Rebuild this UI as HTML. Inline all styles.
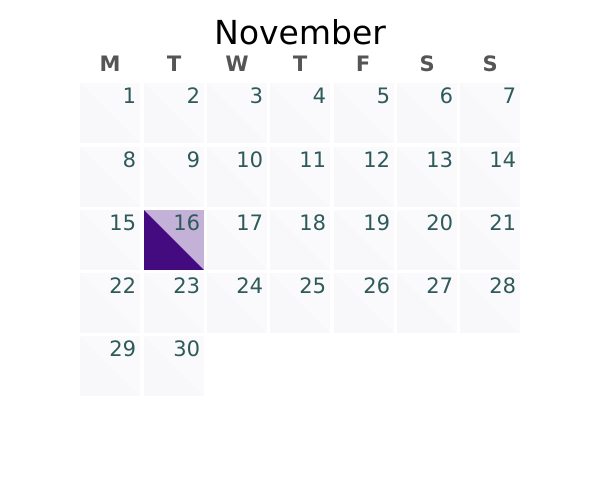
<!DOCTYPE html>
<html><head><meta charset="utf-8"><style>html,body{margin:0;padding:0;background:#fff;}svg{display:block}</style></head>
<body>
<svg width="600" height="480" xmlns="http://www.w3.org/2000/svg" font-family="DejaVu Sans, sans-serif">
<text x="300" y="44" text-anchor="middle" font-size="33" fill="#000">November</text>
<g font-size="21" font-weight="bold" fill="#555" text-anchor="middle">
<text x="110" y="71">M</text><text x="174" y="71">T</text><text x="237" y="71">W</text><text x="300" y="71">T</text><text x="363" y="71">F</text><text x="427" y="71">S</text><text x="490" y="71">S</text>
</g>
<g font-size="21" fill="#2f5a5a" text-anchor="end">
<g transform="translate(80,83)"><rect width="60" height="60" fill="#f8f8fa"/><polygon points="0,0 60,0 60,60" fill="#fafafc"/><text x="56" y="20">1</text></g>
<g transform="translate(144,83)"><rect width="60" height="60" fill="#f8f8fa"/><polygon points="0,0 60,0 60,60" fill="#fafafc"/><text x="56" y="20">2</text></g>
<g transform="translate(207,83)"><rect width="60" height="60" fill="#f8f8fa"/><polygon points="0,0 60,0 60,60" fill="#fafafc"/><text x="56" y="20">3</text></g>
<g transform="translate(270,83)"><rect width="60" height="60" fill="#f8f8fa"/><polygon points="0,0 60,0 60,60" fill="#fafafc"/><text x="56" y="20">4</text></g>
<g transform="translate(334,83)"><rect width="60" height="60" fill="#f8f8fa"/><polygon points="0,0 60,0 60,60" fill="#fafafc"/><text x="56" y="20">5</text></g>
<g transform="translate(397,83)"><rect width="60" height="60" fill="#f8f8fa"/><polygon points="0,0 60,0 60,60" fill="#fafafc"/><text x="56" y="20">6</text></g>
<g transform="translate(460,83)"><rect width="60" height="60" fill="#f8f8fa"/><polygon points="0,0 60,0 60,60" fill="#fafafc"/><text x="56" y="20">7</text></g>
<g transform="translate(80,147)"><rect width="60" height="60" fill="#f8f8fa"/><polygon points="0,0 60,0 60,60" fill="#fafafc"/><text x="56" y="20">8</text></g>
<g transform="translate(144,147)"><rect width="60" height="60" fill="#f8f8fa"/><polygon points="0,0 60,0 60,60" fill="#fafafc"/><text x="56" y="20">9</text></g>
<g transform="translate(207,147)"><rect width="60" height="60" fill="#f8f8fa"/><polygon points="0,0 60,0 60,60" fill="#fafafc"/><text x="56" y="20">10</text></g>
<g transform="translate(270,147)"><rect width="60" height="60" fill="#f8f8fa"/><polygon points="0,0 60,0 60,60" fill="#fafafc"/><text x="56" y="20">11</text></g>
<g transform="translate(334,147)"><rect width="60" height="60" fill="#f8f8fa"/><polygon points="0,0 60,0 60,60" fill="#fafafc"/><text x="56" y="20">12</text></g>
<g transform="translate(397,147)"><rect width="60" height="60" fill="#f8f8fa"/><polygon points="0,0 60,0 60,60" fill="#fafafc"/><text x="56" y="20">13</text></g>
<g transform="translate(460,147)"><rect width="60" height="60" fill="#f8f8fa"/><polygon points="0,0 60,0 60,60" fill="#fafafc"/><text x="56" y="20">14</text></g>
<g transform="translate(80,210)"><rect width="60" height="60" fill="#f8f8fa"/><polygon points="0,0 60,0 60,60" fill="#fafafc"/><text x="56" y="20">15</text></g>
<g transform="translate(144,210)"><rect width="60" height="60" fill="#440a80"/><polygon points="0,0 60,0 60,60" fill="#c4b1d8"/><text x="56" y="20">16</text></g>
<g transform="translate(207,210)"><rect width="60" height="60" fill="#f8f8fa"/><polygon points="0,0 60,0 60,60" fill="#fafafc"/><text x="56" y="20">17</text></g>
<g transform="translate(270,210)"><rect width="60" height="60" fill="#f8f8fa"/><polygon points="0,0 60,0 60,60" fill="#fafafc"/><text x="56" y="20">18</text></g>
<g transform="translate(334,210)"><rect width="60" height="60" fill="#f8f8fa"/><polygon points="0,0 60,0 60,60" fill="#fafafc"/><text x="56" y="20">19</text></g>
<g transform="translate(397,210)"><rect width="60" height="60" fill="#f8f8fa"/><polygon points="0,0 60,0 60,60" fill="#fafafc"/><text x="56" y="20">20</text></g>
<g transform="translate(460,210)"><rect width="60" height="60" fill="#f8f8fa"/><polygon points="0,0 60,0 60,60" fill="#fafafc"/><text x="56" y="20">21</text></g>
<g transform="translate(80,273)"><rect width="60" height="60" fill="#f8f8fa"/><polygon points="0,0 60,0 60,60" fill="#fafafc"/><text x="56" y="20">22</text></g>
<g transform="translate(144,273)"><rect width="60" height="60" fill="#f8f8fa"/><polygon points="0,0 60,0 60,60" fill="#fafafc"/><text x="56" y="20">23</text></g>
<g transform="translate(207,273)"><rect width="60" height="60" fill="#f8f8fa"/><polygon points="0,0 60,0 60,60" fill="#fafafc"/><text x="56" y="20">24</text></g>
<g transform="translate(270,273)"><rect width="60" height="60" fill="#f8f8fa"/><polygon points="0,0 60,0 60,60" fill="#fafafc"/><text x="56" y="20">25</text></g>
<g transform="translate(334,273)"><rect width="60" height="60" fill="#f8f8fa"/><polygon points="0,0 60,0 60,60" fill="#fafafc"/><text x="56" y="20">26</text></g>
<g transform="translate(397,273)"><rect width="60" height="60" fill="#f8f8fa"/><polygon points="0,0 60,0 60,60" fill="#fafafc"/><text x="56" y="20">27</text></g>
<g transform="translate(460,273)"><rect width="60" height="60" fill="#f8f8fa"/><polygon points="0,0 60,0 60,60" fill="#fafafc"/><text x="56" y="20">28</text></g>
<g transform="translate(80,336)"><rect width="60" height="60" fill="#f8f8fa"/><polygon points="0,0 60,0 60,60" fill="#fafafc"/><text x="56" y="20">29</text></g>
<g transform="translate(144,336)"><rect width="60" height="60" fill="#f8f8fa"/><polygon points="0,0 60,0 60,60" fill="#fafafc"/><text x="56" y="20">30</text></g>
</g>
</svg>
</body></html>
